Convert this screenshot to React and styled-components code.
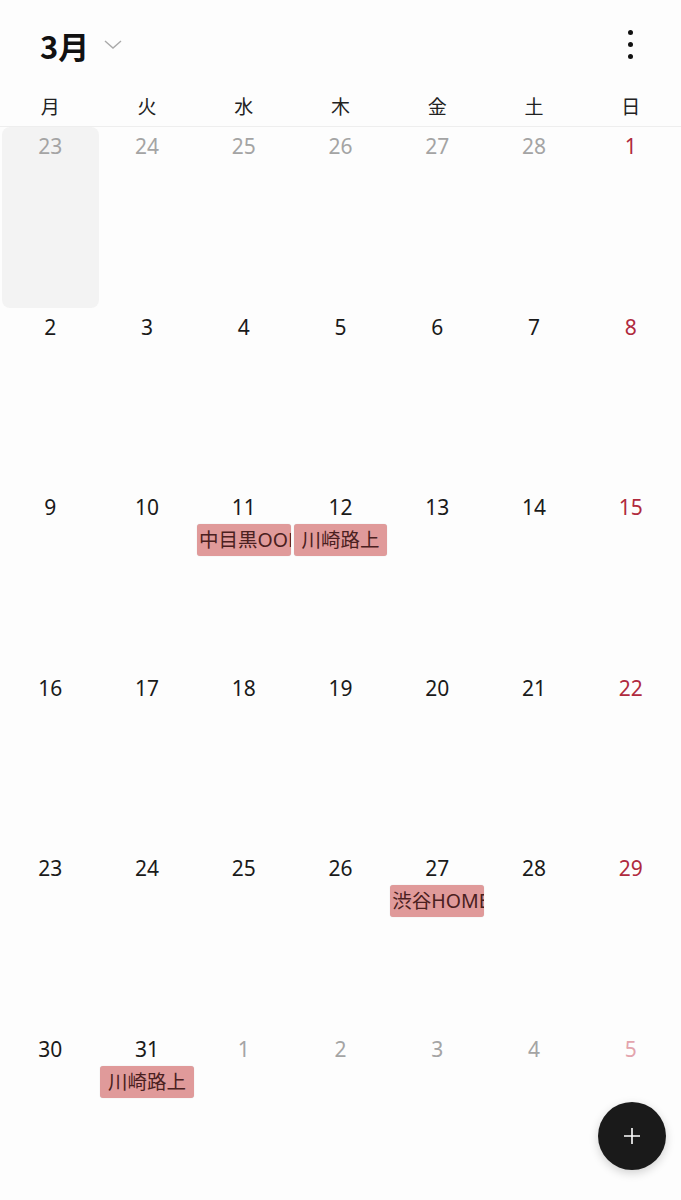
import React from "react";
import styled, { createGlobalStyle } from "styled-components";

const Global = createGlobalStyle`
  html, body {
    margin: 0;
    padding: 0;
    background: #fdfdfd;
    font-family: "Noto Sans", "Noto Sans CJK JP", sans-serif;
  }
`;

const Page = styled.div`
  width: 681px;
  height: 1200px;
  overflow: hidden;
  position: relative;
  background: #fdfdfd;
`;

const Header = styled.div`
  height: 88px;
  display: flex;
  align-items: center;
  justify-content: space-between;
  padding: 0 48px 0 40px;
`;

const Title = styled.div`
  display: flex;
  align-items: center;
  gap: 14px;
  font-family: "Noto Sans CJK JP", sans-serif;
  font-weight: 700;
  font-size: 31px;
  color: #111;
  margin-top: 2px;
`;

const Kebab = styled.div`
  display: flex;
  flex-direction: column;
  gap: 7px;
  span {
    width: 5px;
    height: 5px;
    border-radius: 50%;
    background: #111;
  }
`;

const Weekdays = styled.div`
  display: grid;
  grid-template-columns: repeat(7, 1fr);
  padding: 0 2px;
  height: 38px;
  border-bottom: 1px solid #eeeeee;
`;

const Weekday = styled.div`
  display: flex;
  justify-content: center;
  align-items: center;
  font-family: "Noto Sans CJK JP", sans-serif;
  font-size: 19px;
  color: #222;
  padding-bottom: 4px;
`;

const Grid = styled.div`
  display: grid;
  grid-template-columns: repeat(7, 1fr);
  grid-auto-rows: 180.6px;
  padding: 0 2px;
`;

const Cell = styled.div`
  display: flex;
  flex-direction: column;
  align-items: center;
  border-radius: 8px;
  background: ${({ $today }) => ($today ? "#f3f3f3" : "transparent")};
  padding: 5px 1.5px 0;
  min-width: 0;
`;

const Num = styled.div`
  font-size: 21px;
  line-height: 28px;
  color: ${({ $tone }) =>
    $tone === "sun"
      ? "#b02a3e"
      : $tone === "sunOut"
      ? "#e3a4ad"
      : $tone === "out"
      ? "#a4a4a4"
      : "#1a1a1a"};
`;

const Chip = styled.div`
  margin-top: 3px;
  width: 100%;
  height: 32px;
  box-sizing: border-box;
  background: #e09a9a;
  border-radius: 3px;
  box-shadow: 0 0 1px rgba(0, 0, 0, 0.2);
  color: #4a2020;
  font-family: "Noto Sans", "Noto Sans CJK JP", sans-serif;
  font-size: 19.5px;
  line-height: 32px;
  white-space: nowrap;
  overflow: hidden;
  text-align: ${({ $clip }) => ($clip ? "left" : "center")};
  padding-left: ${({ $clip }) => ($clip ? "2px" : "0")};
`;

const Fab = styled.div`
  position: absolute;
  right: 15px;
  bottom: 30px;
  width: 68px;
  height: 68px;
  border-radius: 50%;
  background: #1a1a1a;
  box-shadow: 0 3px 10px rgba(0, 0, 0, 0.18);
  display: flex;
  align-items: center;
  justify-content: center;
`;

const weekdays = ["月", "火", "水", "木", "金", "土", "日"];

const events = {
  11: { text: "中目黒OOF", clip: true },
  12: { text: "川崎路上" },
  27: { text: "渋谷HOME", clip: true },
  31: { text: "川崎路上" },
};

const buildDays = () => {
  const days = [];
  [23, 24, 25, 26, 27, 28].forEach((d) => days.push({ d, out: "prev" }));
  for (let d = 1; d <= 31; d++) days.push({ d, out: null });
  [1, 2, 3, 4, 5].forEach((d) => days.push({ d, out: "next" }));
  return days;
};

const toneOf = (day, i) => {
  const sun = i % 7 === 6;
  if (day.out === "next") return sun ? "sunOut" : "out";
  if (sun) return "sun";
  if (day.out === "prev") return "out";
  return "in";
};

const App = () => {
  const days = buildDays();
  return (
    <Page>
      <Global />
      <Header>
        <Title>
          3月
          <svg width="20" height="12" viewBox="0 0 20 12">
            <path d="M2 2 L10 9 L18 2" fill="none" stroke="#aaa" strokeWidth="1.4" />
          </svg>
        </Title>
        <Kebab>
          <span />
          <span />
          <span />
        </Kebab>
      </Header>
      <Weekdays>
        {weekdays.map((w) => (
          <Weekday key={w}>{w}</Weekday>
        ))}
      </Weekdays>
      <Grid>
        {days.map((day, i) => {
          const ev = !day.out ? events[day.d] : null;
          return (
            <Cell key={i} $today={i === 0}>
              <Num $tone={toneOf(day, i)}>{day.d}</Num>
              {ev && <Chip $clip={ev.clip}>{ev.text}</Chip>}
            </Cell>
          );
        })}
      </Grid>
      <Fab>
        <svg width="20" height="20" viewBox="0 0 20 20">
          <path d="M10 2 V18 M2 10 H18" stroke="#fff" strokeWidth="1.6" />
        </svg>
      </Fab>
    </Page>
  );
};

export default App;
